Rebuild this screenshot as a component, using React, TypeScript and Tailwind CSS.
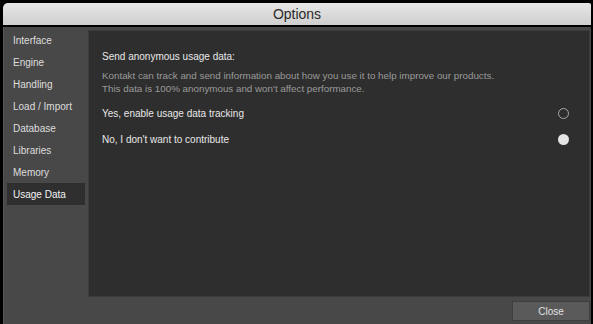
const items = ["Interface", "Engine", "Handling", "Load / Import", "Database", "Libraries", "Memory", "Usage Data"];

export default function App() {
  return (
    <div className="w-[593px] h-[324px] bg-black pt-[3px] pl-[3px] pr-[2px] overflow-hidden font-['Liberation_Sans',sans-serif]">
      <div className="h-[22px] rounded-tl-[5px] rounded-tr-[2px] bg-gradient-to-b from-[#e6e6e6] to-[#cfcfcf] flex items-center justify-center text-[14px] text-[#2a2a2a]">
        Options
      </div>
      <div className="mt-[2px] h-[297px] bg-[#484848] border-l border-[#565656] flex flex-col">
        <div className="flex flex-1 pt-[3px]">
          <div className="w-[84px] pl-[3px] pr-[3px] -mt-[1px] flex flex-col">
            {items.map((it) => (
              <div
                key={it}
                className={`h-[22px] flex items-center pl-[6px] text-[10px] ${it === "Usage Data" ? "bg-[#2f2f2f] text-[#f2f2f2]" : "text-[#dedede]"}`}
              >
                {it}
              </div>
            ))}
          </div>
          <div className="flex-1 mr-[1px] mb-[3px] bg-[#2e2e2e] border border-[#3c3c3c] pl-[13px] pr-[20px] pt-[18px]">
            <div className="text-[10px] text-[#e8e8e8]">Send anonymous usage data:</div>
            <div className="mt-[5px] text-[9.8px] leading-[13px] text-[#9a9a9a]">
              <div>Kontakt can track and send information about how you use it to help improve our products.</div>
              <div>This data is 100% anonymous and won't affect performance.</div>
            </div>
            <div className="mt-[11px] h-[14px] flex items-center justify-between text-[10px] text-[#e8e8e8]">
              <span>Yes, enable usage data tracking</span>
              <span className="w-[11px] h-[11px] rounded-full border border-[#a8a8a8]" />
            </div>
            <div className="mt-[12px] h-[14px] flex items-center justify-between text-[10px] text-[#e8e8e8]">
              <span>No, I don't want to contribute</span>
              <span className="w-[11px] h-[11px] rounded-full bg-[#e4e4e4]" />
            </div>
          </div>
        </div>
        <div className="h-[24px] flex items-start justify-end pr-[1px] pt-[1px]">
          <button className="w-[78px] h-[20px] bg-[#5a5a5a] border border-[#3e3e3e] text-[10px] text-[#e0e0e0]">Close</button>
        </div>
      </div>
    </div>
  );
}
